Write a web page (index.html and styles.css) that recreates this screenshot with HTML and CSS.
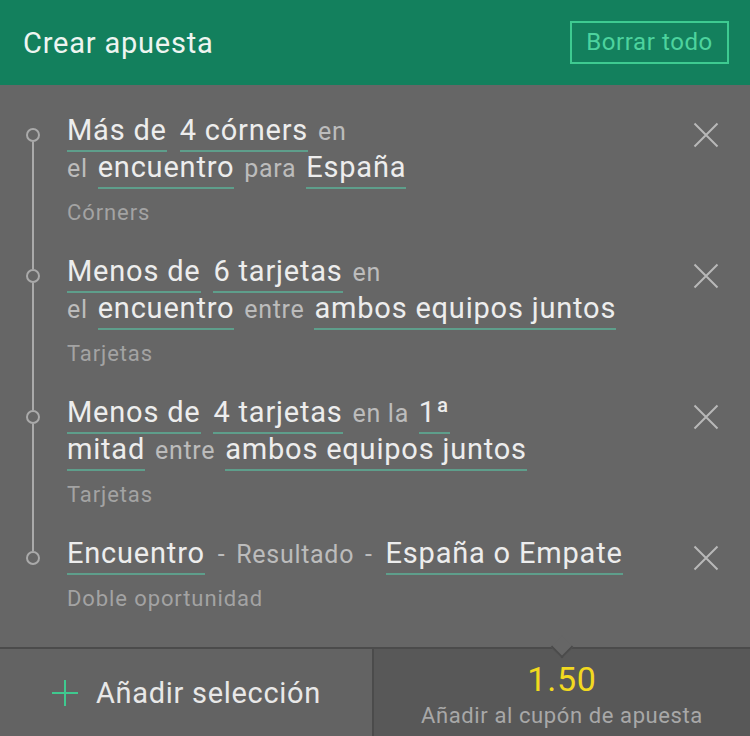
FILE: index.html
```html
<!DOCTYPE html>
<html lang="es">
<head>
<meta charset="utf-8">
<title>Crear apuesta</title>
<link rel="stylesheet" href="styles.css">
</head>
<body>
<div class="app">
  <header class="header">
    <h1 class="title">Crear apuesta</h1>
    <button class="clear-btn">Borrar todo</button>
  </header>

  <main class="list">
    <div class="row">
      <div class="gutter"><span class="seg seg-top hidden"></span><span class="dot"></span><span class="seg seg-bottom"></span></div>
      <div class="content">
        <div class="text"><span class="sel first">Más de</span> <span class="sel">4 córners</span> en<br>el <span class="sel">encuentro</span> para <span class="sel">España</span></div>
        <div class="cat">Córners</div>
      </div>
      <div class="remove"><svg width="26" height="26" viewBox="0 0 26 26"><path d="M1.5 1.5 L24.5 24.5 M24.5 1.5 L1.5 24.5" stroke="#b8b8b8" stroke-width="2" fill="none"/></svg></div>
    </div>

    <div class="row">
      <div class="gutter"><span class="seg seg-top"></span><span class="dot"></span><span class="seg seg-bottom"></span></div>
      <div class="content">
        <div class="text"><span class="sel first">Menos de</span> <span class="sel">6 tarjetas</span> en<br>el <span class="sel">encuentro</span> entre <span class="sel">ambos equipos juntos</span></div>
        <div class="cat">Tarjetas</div>
      </div>
      <div class="remove"><svg width="26" height="26" viewBox="0 0 26 26"><path d="M1.5 1.5 L24.5 24.5 M24.5 1.5 L1.5 24.5" stroke="#b8b8b8" stroke-width="2" fill="none"/></svg></div>
    </div>

    <div class="row">
      <div class="gutter"><span class="seg seg-top"></span><span class="dot"></span><span class="seg seg-bottom"></span></div>
      <div class="content">
        <div class="text"><span class="sel first">Menos de</span> <span class="sel">4 tarjetas</span> en la <span class="sel">1ª</span><br><span class="sel first">mitad</span> entre <span class="sel">ambos equipos juntos</span></div>
        <div class="cat">Tarjetas</div>
      </div>
      <div class="remove"><svg width="26" height="26" viewBox="0 0 26 26"><path d="M1.5 1.5 L24.5 24.5 M24.5 1.5 L1.5 24.5" stroke="#b8b8b8" stroke-width="2" fill="none"/></svg></div>
    </div>

    <div class="row">
      <div class="gutter"><span class="seg seg-top"></span><span class="dot"></span><span class="seg seg-bottom hidden"></span></div>
      <div class="content">
        <div class="text"><span class="sel first">Encuentro</span> <span class="conn">- Resultado -</span> <span class="sel">España o Empate</span></div>
        <div class="cat">Doble oportunidad</div>
      </div>
      <div class="remove"><svg width="26" height="26" viewBox="0 0 26 26"><path d="M1.5 1.5 L24.5 24.5 M24.5 1.5 L1.5 24.5" stroke="#b8b8b8" stroke-width="2" fill="none"/></svg></div>
    </div>
  </main>

  <footer class="footer">
    <div class="add">
      <svg class="plus" width="28" height="28" viewBox="0 0 28 28"><path d="M14 1 V27 M1 14 H27" stroke="#3fc98f" stroke-width="2" fill="none"/></svg>
      <span class="add-label">Añadir selección</span>
    </div>
    <div class="coupon">
      <div class="odds">1.50</div>
      <div class="coupon-label">Añadir al cupón de apuesta</div>
    </div>
  </footer>
</div>
</body>
</html>
```

FILE: styles.css
```css
* { box-sizing: border-box; }
html, body { margin: 0; padding: 0; }
body {
  font-family: Roboto, "Liberation Sans", sans-serif;
  background: #666666;
  width: 750px;
  height: 736px;
  overflow: hidden;
}
.app {
  display: flex;
  flex-direction: column;
  height: 736px;
}
.header {
  height: 85px;
  flex: none;
  background: #13805d;
  display: flex;
  align-items: center;
  justify-content: space-between;
  padding: 0 21px 0 23px;
}
.title {
  margin: 0;
  font-size: 29px;
  font-weight: 400;
  letter-spacing: 0.8px;
  color: #eef5f1;
}
.clear-btn {
  width: 159px;
  height: 43px;
  border: 2px solid #3ecb91;
  background: transparent;
  color: #4dd39e;
  font-family: Roboto, "Liberation Sans", sans-serif;
  font-size: 24px;
  letter-spacing: 0.6px;
  padding: 0;
  margin-top: -1px;
}
.list {
  flex: 1;
  background: #666666;
  padding-top: 14px;
}
.row {
  display: grid;
  grid-template-columns: 66px 1fr 88px;
}
.gutter {
  display: flex;
  flex-direction: column;
  align-items: center;
  padding-right: 1px;
}
.seg {
  width: 2px;
  background: #aaaaaa;
}
.seg-top { height: 29px; flex: none; }
.seg-bottom { flex: 1; }
.hidden { visibility: hidden; }
.dot {
  width: 14px;
  height: 14px;
  border: 2px solid #aaaaaa;
  border-radius: 50%;
  flex: none;
}
.content {
  padding: 14px 0 13px 1px;
}
.text {
  font-size: 25px;
  line-height: 37px;
  letter-spacing: 0.7px;
  color: #bcbcbc;
}
.sel {
  font-size: 29px;
  line-height: 1;
  color: #ededed;
  border-bottom: 2px solid #5e9e8b;
  padding-bottom: 3px;
  margin: 0 3px;
  letter-spacing: 0.8px;
}
.sel.first { margin-left: 0; }
.conn {
  margin: 0 3px;
  word-spacing: 4px;
}
.cat {
  margin-top: 12px;
  font-size: 22px;
  line-height: 28px;
  letter-spacing: 0.9px;
  color: #a3a3a3;
}
.remove {
  display: flex;
  justify-content: center;
  padding-top: 23px;
}
.remove svg { display: block; }
.footer {
  height: 89px;
  flex: none;
  border-top: 2px solid #4b4b4b;
  display: grid;
  grid-template-columns: 372px 1fr;
}
.add {
  background: #636363;
  display: flex;
  align-items: center;
  padding-left: 51px;
  gap: 17px;
}
.plus { display: block; }
.add-label {
  font-size: 29px;
  letter-spacing: 0.7px;
  color: #e8e8e8;
}
.coupon {
  position: relative;
  background: #585858;
  border-left: 2px solid #4b4b4b;
  display: flex;
  flex-direction: column;
  align-items: center;
  padding-top: 11px;
  gap: 4px;
}
.coupon::before {
  content: "";
  position: absolute;
  top: -10px;
  left: 50%;
  width: 14px;
  height: 14px;
  margin-left: -8px;
  background: #666666;
  border-right: 2px solid #4b4b4b;
  border-bottom: 2px solid #4b4b4b;
  transform: rotate(45deg);
}
.odds {
  font-size: 34px;
  line-height: 38px;
  letter-spacing: 0.8px;
  color: #f2d91f;
}
.coupon-label {
  font-size: 22px;
  line-height: 28px;
  letter-spacing: 0.6px;
  color: #a8a8a8;
}
```
